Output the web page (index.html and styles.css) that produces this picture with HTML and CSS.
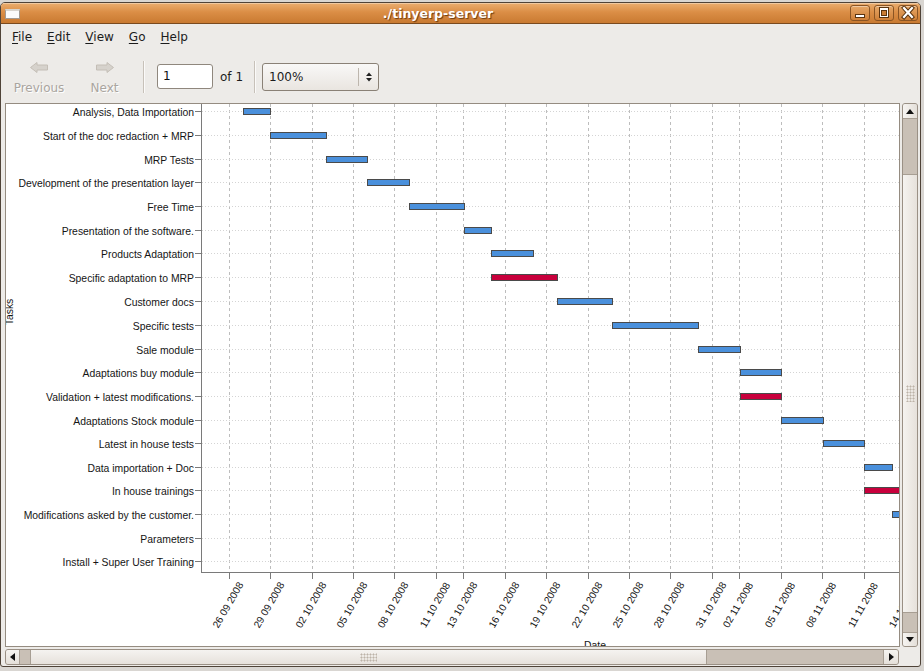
FILE: index.html
```html
<!DOCTYPE html>
<html>
<head>
<meta charset="utf-8">
<title>./tinyerp-server</title>
<link rel="stylesheet" href="styles.css">
</head>
<body>
<div class="window">
  <div class="titlebar">
    <span class="win-icon"></span>
    <span class="title">./tinyerp-server</span>
    <div class="wbtns">
      <span class="wbtn"><svg width="18" height="14" viewBox="0 0 18 14"><rect x="4.5" y="8.5" width="9" height="3" fill="#fff" stroke="#5a3410"/></svg></span>
      <span class="wbtn"><svg width="18" height="14" viewBox="0 0 18 14"><rect x="4.5" y="1.5" width="9" height="10" fill="#fff" stroke="#5a3410"/><rect x="6.5" y="4.5" width="5" height="5" fill="#c97c34" stroke="#5a3410"/></svg></span>
      <span class="wbtn"><svg width="18" height="14" viewBox="0 0 18 14"><path d="M5 2 L13 11 M13 2 L5 11" stroke="#5a3410" stroke-width="4.2" stroke-linecap="square"/><path d="M5 2 L13 11 M13 2 L5 11" stroke="#fff" stroke-width="2.2" stroke-linecap="square"/></svg></span>
    </div>
  </div>
  <div class="menubar">
    <span><u>F</u>ile</span>
    <span><u>E</u>dit</span>
    <span><u>V</u>iew</span>
    <span><u>G</u>o</span>
    <span><u>H</u>elp</span>
  </div>
  <div class="toolbar">
    <div class="tbtn prev">
      <svg width="20" height="11" viewBox="0 0 20 11"><path d="M1.5 5.5 L8 0.5 L8 3 L18.5 3 L18.5 8 L8 8 L8 10.5 Z" fill="#d6d2cc" stroke="#c4beb6"/></svg>
      <span>Previous</span>
    </div>
    <div class="tbtn next">
      <svg width="20" height="11" viewBox="0 0 20 11"><path d="M18.5 5.5 L12 0.5 L12 3 L1.5 3 L1.5 8 L12 8 L12 10.5 Z" fill="#d6d2cc" stroke="#c4beb6"/></svg>
      <span>Next</span>
    </div>
    <div class="sep sep1"></div>
    <div class="entry">1</div>
    <span class="of">of 1</span>
    <div class="sep sep2"></div>
    <div class="combo">
      <span class="combo-text">100%</span>
      <span class="combo-sep"></span>
      <svg width="8" height="12" viewBox="0 0 8 12"><path d="M1 5 L4 1.5 L7 5 Z" fill="#222"/><path d="M1 7 L4 10.5 L7 7 Z" fill="#222"/></svg>
    </div>
  </div>
  <div class="content">
    <div class="mainrow">
      <div class="viewport">
        <svg class="chart" width="893" height="542" viewBox="6 104 893 542">
          <g class="vgrid">
            <line x1="229.5" y1="104" x2="229.5" y2="572"/>
            <line x1="270.5" y1="104" x2="270.5" y2="572"/>
            <line x1="312.5" y1="104" x2="312.5" y2="572"/>
            <line x1="353.5" y1="104" x2="353.5" y2="572"/>
            <line x1="394.5" y1="104" x2="394.5" y2="572"/>
            <line x1="436.5" y1="104" x2="436.5" y2="572"/>
            <line x1="463.5" y1="104" x2="463.5" y2="572"/>
            <line x1="505.5" y1="104" x2="505.5" y2="572"/>
            <line x1="546.5" y1="104" x2="546.5" y2="572"/>
            <line x1="588.5" y1="104" x2="588.5" y2="572"/>
            <line x1="629.5" y1="104" x2="629.5" y2="572"/>
            <line x1="670.5" y1="104" x2="670.5" y2="572"/>
            <line x1="712.5" y1="104" x2="712.5" y2="572"/>
            <line x1="739.5" y1="104" x2="739.5" y2="572"/>
            <line x1="781.5" y1="104" x2="781.5" y2="572"/>
            <line x1="822.5" y1="104" x2="822.5" y2="572"/>
            <line x1="864.5" y1="104" x2="864.5" y2="572"/>
          </g>
          <g class="hgrid">
            <line x1="202" y1="111.5" x2="899" y2="111.5"/>
            <line x1="202" y1="135.5" x2="899" y2="135.5"/>
            <line x1="202" y1="159.5" x2="899" y2="159.5"/>
            <line x1="202" y1="182.5" x2="899" y2="182.5"/>
            <line x1="202" y1="206.5" x2="899" y2="206.5"/>
            <line x1="202" y1="230.5" x2="899" y2="230.5"/>
            <line x1="202" y1="253.5" x2="899" y2="253.5"/>
            <line x1="202" y1="277.5" x2="899" y2="277.5"/>
            <line x1="202" y1="301.5" x2="899" y2="301.5"/>
            <line x1="202" y1="325.5" x2="899" y2="325.5"/>
            <line x1="202" y1="349.5" x2="899" y2="349.5"/>
            <line x1="202" y1="372.5" x2="899" y2="372.5"/>
            <line x1="202" y1="396.5" x2="899" y2="396.5"/>
            <line x1="202" y1="420.5" x2="899" y2="420.5"/>
            <line x1="202" y1="443.5" x2="899" y2="443.5"/>
            <line x1="202" y1="467.5" x2="899" y2="467.5"/>
            <line x1="202" y1="490.5" x2="899" y2="490.5"/>
            <line x1="202" y1="514.5" x2="899" y2="514.5"/>
            <line x1="202" y1="538.5" x2="899" y2="538.5"/>
            <line x1="202" y1="561.5" x2="899" y2="561.5"/>
          </g>
          <g class="axis">
            <line x1="201.5" y1="104" x2="201.5" y2="573"/>
            <line x1="201" y1="572.5" x2="899" y2="572.5"/>
            <path d="M195 111.5H201M195 135.5H201M195 159.5H201M195 182.5H201M195 206.5H201M195 230.5H201M195 253.5H201M195 277.5H201M195 301.5H201M195 325.5H201M195 349.5H201M195 372.5H201M195 396.5H201M195 420.5H201M195 443.5H201M195 467.5H201M195 490.5H201M195 514.5H201M195 538.5H201M195 561.5H201"/>
            <path d="M229.5 573V579M270.5 573V579M312.5 573V579M353.5 573V579M394.5 573V579M436.5 573V579M463.5 573V579M505.5 573V579M546.5 573V579M588.5 573V579M629.5 573V579M670.5 573V579M712.5 573V579M739.5 573V579M781.5 573V579M822.5 573V579M864.5 573V579"/>
          </g>
          <g class="bars">
            <rect class="b" x="243.5" y="108.5" width="27" height="6"/>
            <rect class="b" x="270.5" y="132.5" width="56" height="6"/>
            <rect class="b" x="326.5" y="156.5" width="41" height="6"/>
            <rect class="b" x="367.5" y="179.5" width="42" height="6"/>
            <rect class="b" x="409.5" y="203.5" width="55" height="6"/>
            <rect class="b" x="464.5" y="227.5" width="27" height="6"/>
            <rect class="b" x="491.5" y="250.5" width="42" height="6"/>
            <rect class="r" x="491.5" y="274.5" width="66" height="6"/>
            <rect class="b" x="557.5" y="298.5" width="55" height="6"/>
            <rect class="b" x="612.5" y="322.5" width="86" height="6"/>
            <rect class="b" x="698.5" y="346.5" width="42" height="6"/>
            <rect class="b" x="740.5" y="369.5" width="41" height="6"/>
            <rect class="r" x="740.5" y="393.5" width="41" height="6"/>
            <rect class="b" x="781.5" y="417.5" width="42" height="6"/>
            <rect class="b" x="823.5" y="440.5" width="41" height="6"/>
            <rect class="b" x="864.5" y="464.5" width="28" height="6"/>
            <rect class="r" x="864.5" y="487.5" width="60" height="6"/>
            <rect class="b" x="892.5" y="511.5" width="40" height="6"/>
          </g>
          <g class="ylabels">
            <text x="194" y="115.5">Analysis, Data Importation</text>
            <text x="194" y="139.5">Start of the doc redaction + MRP</text>
            <text x="194" y="163.5">MRP Tests</text>
            <text x="194" y="186.5">Development of the presentation layer</text>
            <text x="194" y="210.5">Free Time</text>
            <text x="194" y="234.5">Presentation of the software.</text>
            <text x="194" y="257.5">Products Adaptation</text>
            <text x="194" y="281.5">Specific adaptation to MRP</text>
            <text x="194" y="305.5">Customer docs</text>
            <text x="194" y="329.5">Specific tests</text>
            <text x="194" y="353.5">Sale module</text>
            <text x="194" y="376.5">Adaptations buy module</text>
            <text x="194" y="400.5">Validation + latest modifications.</text>
            <text x="194" y="424.5">Adaptations Stock module</text>
            <text x="194" y="447.5">Latest in house tests</text>
            <text x="194" y="471.5">Data importation + Doc</text>
            <text x="194" y="494.5">In house trainings</text>
            <text x="194" y="518.5">Modifications asked by the customer.</text>
            <text x="194" y="542.5">Parameters</text>
            <text x="194" y="565.5">Install + Super User Training</text>
          </g>
          <g class="xlabels">
            <text transform="translate(228 605) rotate(-60)">26 09 2008</text>
            <text transform="translate(269 605) rotate(-60)">29 09 2008</text>
            <text transform="translate(311 605) rotate(-60)">02 10 2008</text>
            <text transform="translate(352 605) rotate(-60)">05 10 2008</text>
            <text transform="translate(393 605) rotate(-60)">08 10 2008</text>
            <text transform="translate(435 605) rotate(-60)">11 10 2008</text>
            <text transform="translate(462 605) rotate(-60)">13 10 2008</text>
            <text transform="translate(504 605) rotate(-60)">16 10 2008</text>
            <text transform="translate(545 605) rotate(-60)">19 10 2008</text>
            <text transform="translate(587 605) rotate(-60)">22 10 2008</text>
            <text transform="translate(628 605) rotate(-60)">25 10 2008</text>
            <text transform="translate(669 605) rotate(-60)">28 10 2008</text>
            <text transform="translate(711 605) rotate(-60)">31 10 2008</text>
            <text transform="translate(738 605) rotate(-60)">02 11 2008</text>
            <text transform="translate(780 605) rotate(-60)">05 11 2008</text>
            <text transform="translate(821 605) rotate(-60)">08 11 2008</text>
            <text transform="translate(863 605) rotate(-60)">11 11 2008</text>
            <text transform="translate(904 605) rotate(-60)">14 11 2008</text>
          </g>
          <text class="axtitle" transform="translate(13 312) rotate(-90)">Tasks</text>
          <text class="axtitle" x="595" y="649">Date</text>
        </svg>
      </div>
      <div class="vscroll">
        <div class="stepper up"><svg width="8" height="5" viewBox="0 0 8 5"><path d="M0 5 L4 0 L8 5 Z" fill="#111"/></svg></div>
        <div class="trough t1"></div>
        <div class="slider"><span class="grip"></span></div>
        <div class="trough t2"></div>
        <div class="stepper down"><svg width="8" height="5" viewBox="0 0 8 5"><path d="M0 0 L4 5 L8 0 Z" fill="#111"/></svg></div>
      </div>
    </div>
    <div class="hscroll">
      <div class="stepper left"><svg width="5" height="8" viewBox="0 0 5 8"><path d="M5 0 L0 4 L5 8 Z" fill="#111"/></svg></div>
      <div class="trough t1"></div>
      <div class="slider"><span class="grip"></span></div>
      <div class="trough t2"></div>
      <div class="stepper right"><svg width="5" height="8" viewBox="0 0 5 8"><path d="M0 0 L5 4 L0 8 Z" fill="#111"/></svg></div>
    </div>
  </div>
</div>
</body>
</html>
```
FILE: styles.css
```css
* { box-sizing: border-box; }
html, body { margin: 0; padding: 0; }
body {
  width: 924px;
  height: 671px;
  overflow: hidden;
  background: #d9d6d2;
  font-family: "DejaVu Sans", "Liberation Sans", sans-serif;
}
.window {
  margin-top: 2px;
  width: 921px;
  height: 665px;
  border: 1px solid #4f4338;
  border-radius: 5px 5px 3px 3px;
  background: #edebe8;
  display: flex;
  flex-direction: column;
  overflow: hidden;
}
.titlebar {
  flex: none;
  height: 21px;
  display: flex;
  align-items: center;
  padding: 0 2px 0 4px;
  background: linear-gradient(#eaae70, #db8e46 45%, #c97a31);
  border-bottom: 1px solid #7a4a1e;
  box-shadow: inset 0 1px rgba(255,255,255,0.35);
}
.win-icon {
  width: 15px;
  height: 10px;
  margin-top: 2px;
  background: #fbfbfb;
  border: 1px solid #a29a92;
  border-top: 2px solid #d8d4ce;
}
.title {
  flex: 1;
  text-align: center;
  color: #fff;
  font-weight: bold;
  font-size: 12.5px;
  text-shadow: 1px 1px 1px #6b3a10;
  padding-left: 6px;
}
.wbtns { display: flex; gap: 4px; }
.wbtn {
  width: 20px;
  height: 16px;
  border: 1px solid #8a5423;
  border-radius: 3px;
  background: linear-gradient(#e6a767, #cf8038);
  box-shadow: inset 0 1px rgba(255,255,255,0.4);
  display: flex;
  align-items: center;
  justify-content: center;
}
.menubar {
  flex: none;
  height: 24px;
  display: flex;
  align-items: center;
  gap: 15px;
  padding-left: 11px;
  padding-top: 2px;
  font-size: 12px;
  color: #1c1c1c;
}
.menubar u { text-decoration-thickness: 1px; text-underline-offset: 2px; }
.toolbar {
  flex: none;
  height: 55px;
  display: flex;
  align-items: center;
  padding-left: 3px;
  padding-top: 2px;
  font-size: 12px;
}
.tbtn {
  height: 53px;
  display: flex;
  flex-direction: column;
  align-items: center;
  padding-top: 12px;
  color: #aaa59f;
  text-shadow: 1px 1px 0 #fff;
}
.tbtn svg { display: block; }
.tbtn span { margin-top: 8px; line-height: 14px; }
.tbtn.prev { width: 70px; }
.tbtn.next { width: 61px; }
.sep {
  width: 2px;
  height: 32px;
  border-left: 1px solid #c7c1b9;
  border-right: 1px solid #fbfaf9;
}
.sep1 { margin-left: 8px; }
.entry {
  margin-left: 12px;
  width: 56px;
  height: 25px;
  background: #fff;
  border: 1px solid #8f877d;
  border-radius: 3px;
  padding-left: 5px;
  line-height: 23px;
  color: #111;
}
.of { margin-left: 7px; color: #1c1c1c; }
.sep2 { margin-left: 11px; }
.combo {
  margin-left: 6px;
  width: 117px;
  height: 28px;
  border: 1px solid #8a8176;
  border-radius: 3px;
  background: linear-gradient(#f9f8f7, #e9e5e0);
  display: flex;
  align-items: center;
  padding-left: 6px;
  color: #1c1c1c;
}
.combo-text { width: 89px; }
.combo-sep {
  width: 1px;
  height: 18px;
  background: #bdb6ad;
  margin-right: 6px;
}
.content {
  flex: 1;
  display: flex;
  flex-direction: column;
  padding: 0 2px 0 4px;
}
.mainrow { display: flex; gap: 2px; height: 544px; }
.viewport {
  width: 895px;
  height: 544px;
  border: 1px solid #958c81;
  background: #fff;
  overflow: hidden;
}
.chart { display: block; font-family: "Liberation Sans", Arial, sans-serif; }
.vgrid line { stroke: #bdbdbd; stroke-width: 1; stroke-dasharray: 3 3; }
.hgrid line { stroke: #d4d4d4; stroke-width: 1; stroke-dasharray: 1 2; }
.axis line, .axis path { stroke: #7a7a7a; stroke-width: 1; fill: none; }
.bars rect { stroke: #4a4a4a; stroke-width: 1; }
.bars .b { fill: #4a90dc; }
.bars .r { fill: #c8003c; }
.ylabels text { font-size: 10.4px; fill: #151515; text-anchor: end; }
.xlabels text { font-size: 10.2px; fill: #151515; text-anchor: middle; dominant-baseline: central; }
.axtitle { font-size: 10.4px; fill: #151515; text-anchor: middle; }
.vscroll {
  width: 16px;
  height: 544px;
  border: 1px solid #9a9085;
  border-radius: 3px;
  background: #c9c0b6;
  display: flex;
  flex-direction: column;
  overflow: hidden;
}
.stepper {
  display: flex;
  align-items: center;
  justify-content: center;
  background: linear-gradient(90deg, #f6f4f1, #e4dfd9);
}
.vscroll .stepper.up { height: 15px; border-bottom: 1px solid #a79e93; }
.vscroll .stepper.down { height: 14px; border-top: 1px solid #a79e93; }
.vscroll .t1 { height: 55px; }
.vscroll .t2 { height: 19px; }
.vscroll .slider {
  height: 439px;
  border-top: 1px solid #a79e93;
  border-bottom: 1px solid #a79e93;
  background: linear-gradient(90deg, #f5f3f0, #e6e1db);
  display: flex;
  align-items: center;
  justify-content: center;
}
.vscroll .grip {
  width: 9px;
  height: 17px;
  background-image: radial-gradient(#bcb3a8 40%, transparent 55%);
  background-size: 3px 3px;
}
.hscroll {
  margin-top: 2px;
  width: 894px;
  height: 16px;
  border: 1px solid #9a9085;
  border-radius: 3px;
  background: #c9c0b6;
  display: flex;
  overflow: hidden;
}
.hscroll .stepper { background: linear-gradient(#f6f4f1, #e4dfd9); }
.hscroll .stepper.left { width: 14px; border-right: 1px solid #a79e93; }
.hscroll .stepper.right { width: 15px; border-left: 1px solid #a79e93; }
.hscroll .t1 { width: 10px; }
.hscroll .t2 { width: 176px; }
.hscroll .slider {
  width: 677px;
  border-left: 1px solid #a79e93;
  border-right: 1px solid #a79e93;
  background: linear-gradient(#f5f3f0, #e6e1db);
  display: flex;
  align-items: center;
  justify-content: center;
}
.hscroll .grip {
  width: 17px;
  height: 9px;
  background-image: radial-gradient(#bcb3a8 40%, transparent 55%);
  background-size: 3px 3px;
}
```
